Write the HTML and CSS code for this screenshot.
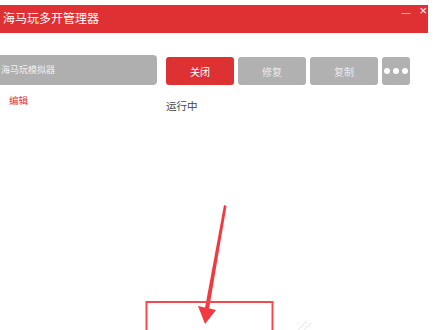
FILE: index.html
```html
<!DOCTYPE html>
<html lang="zh-CN">
<head>
    <meta charset="UTF-8">
    <title>海马玩多开管理器</title>
    <link rel="stylesheet" href="styles.css">
</head>
<body>

    <header class="titlebar">
        <h1>海马玩多开管理器</h1>
        <div class="window-controls">
            <span class="min">—</span>
            <span class="close">×</span>
        </div>
    </header>

    <div class="main">
        <div class="emulator">
            <div class="name-col">
                <div class="name-box">海马玩模拟器</div>
                <a class="edit" href="#">编辑</a>
            </div>
            <div class="action-col">
                <div class="buttons">
                    <button class="btn btn-red">关闭</button>
                    <button class="btn">修复</button>
                    <button class="btn">复制</button>
                    <button class="btn btn-more"><i></i><i></i><i></i></button>
                </div>
                <div class="status">运行中</div>
            </div>
        </div>
    </div>

    <svg class="annotation" width="436" height="330" viewBox="0 0 436 330">
        <polygon points="224,205 226.5,206 209,309 205,308" fill="#f03a3f"/>
        <polygon points="198,306 216,310 205,324" fill="#f03a3f"/>
        <rect x="146.5" y="302" width="126" height="40" fill="none" stroke="#f04a4d" stroke-width="2"/>
        <path d="M298 330 L307 321 M304 330 L311 323" stroke="#e4e4e4" stroke-width="1" fill="none"/>
    </svg>

</body>
</html>
```

FILE: styles.css
```css
body {
    margin: 0;
    padding: 0;
    width: 436px;
    height: 330px;
    overflow: hidden;
    background-color: #fff;
    font-family: "Noto Sans CJK SC", "Liberation Sans", sans-serif;
    position: relative;
}
.titlebar {
    margin-top: 5px;
    width: 428px;
    height: 28px;
    background-color: #df3133;
    color: white;
    display: flex;
    justify-content: space-between;
    align-items: flex-start;
}
.titlebar h1 {
    margin: 0;
    padding: 5px 0 0 3px;
    font-size: 12px;
    font-weight: normal;
    line-height: 16px;
}
.window-controls {
    display: flex;
    gap: 9px;
    padding-right: 1px;
    font-family: "Liberation Sans", sans-serif;
}
.window-controls .min {
    font-size: 9px;
    line-height: 16px;
}
.window-controls .close {
    font-size: 13px;
    line-height: 12px;
}
.main {
    padding-top: 22px;
}
.emulator {
    display: flex;
    gap: 9px;
}
.name-col {
    width: 157px;
}
.name-box {
    height: 30px;
    line-height: 30px;
    background-color: #afafaf;
    border-radius: 0 4px 4px 0;
    color: #f0f0f0;
    font-size: 9px;
    padding-left: 1px;
    overflow: hidden;
    white-space: nowrap;
}
.edit {
    display: block;
    margin: 8px 0 0 9px;
    color: #e53335;
    font-size: 9.5px;
    text-decoration: none;
    line-height: 14px;
}
.action-col {
    padding-top: 2px;
}
.buttons {
    display: flex;
    gap: 4px;
}
.btn {
    width: 68px;
    height: 28px;
    border: none;
    border-radius: 3px;
    background-color: #b1b1b1;
    color: #e9e9e9;
    font-family: "Noto Sans CJK SC", sans-serif;
    font-size: 10px;
    padding: 0;
}
.btn-red {
    background-color: #de3134;
    color: #fff;
}
.btn-more {
    width: 28px;
    display: flex;
    justify-content: center;
    align-items: center;
    gap: 3px;
}
.btn-more i {
    width: 6px;
    height: 6px;
    border-radius: 50%;
    background-color: #fff;
}
.status {
    margin-top: 14px;
    color: #444;
    font-size: 10.5px;
    line-height: 14px;
}
.annotation {
    position: absolute;
    left: 0;
    top: 0;
}
```
